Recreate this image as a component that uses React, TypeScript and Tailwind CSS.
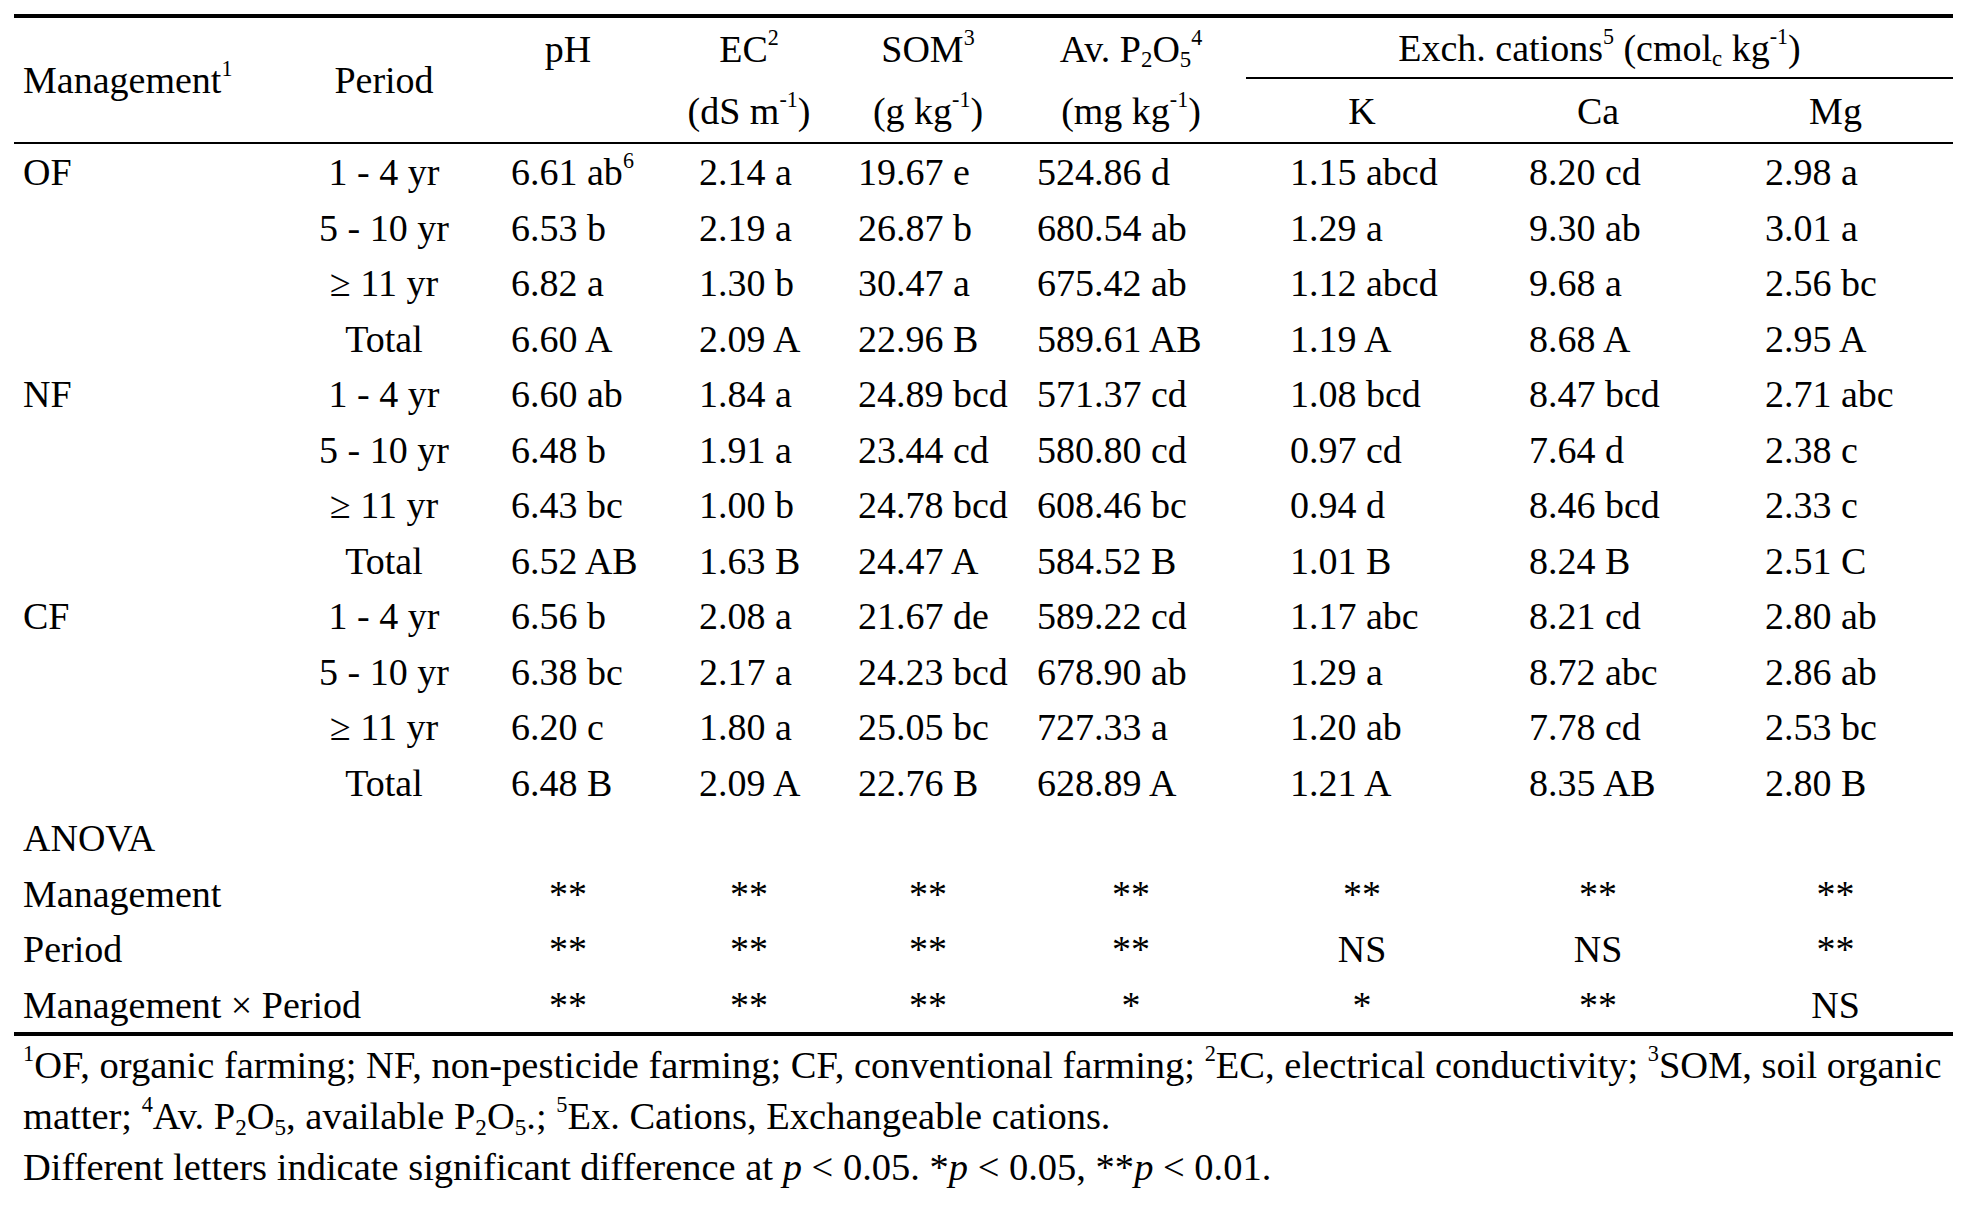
const cols = "grid grid-cols-[276px_188px_180px_182px_176px_230px_232px_240px_235px]";

// left padding of data values inside each numeric column
const pads = ["pl-[33px]", "pl-[41px]", "pl-[18px]", "pl-[21px]", "pl-[44px]", "pl-[51px]", "pl-[47px]"];

const Sup = ({ children }: { children: React.ReactNode }) => (
  <sup className="text-[0.58em] top-[-0.75em]">{children}</sup>
);
const Sub = ({ children }: { children: React.ReactNode }) => (
  <sub className="text-[0.6em]">{children}</sub>
);

type Row = { group?: string; period: string; values: React.ReactNode[] };

const rows: Row[] = [
  { group: "OF", period: "1 - 4 yr", values: [<>6.61 ab<Sup>6</Sup></>, "2.14 a", "19.67 e", "524.86 d", "1.15 abcd", "8.20 cd", "2.98 a"] },
  { period: "5 - 10 yr", values: ["6.53 b", "2.19 a", "26.87 b", "680.54 ab", "1.29 a", "9.30 ab", "3.01 a"] },
  { period: "≥ 11 yr", values: ["6.82 a", "1.30 b", "30.47 a", "675.42 ab", "1.12 abcd", "9.68 a", "2.56 bc"] },
  { period: "Total", values: ["6.60 A", "2.09 A", "22.96 B", "589.61 AB", "1.19 A", "8.68 A", "2.95 A"] },
  { group: "NF", period: "1 - 4 yr", values: ["6.60 ab", "1.84 a", "24.89 bcd", "571.37 cd", "1.08 bcd", "8.47 bcd", "2.71 abc"] },
  { period: "5 - 10 yr", values: ["6.48 b", "1.91 a", "23.44 cd", "580.80 cd", "0.97 cd", "7.64 d", "2.38 c"] },
  { period: "≥ 11 yr", values: ["6.43 bc", "1.00 b", "24.78 bcd", "608.46 bc", "0.94 d", "8.46 bcd", "2.33 c"] },
  { period: "Total", values: ["6.52 AB", "1.63 B", "24.47 A", "584.52 B", "1.01 B", "8.24 B", "2.51 C"] },
  { group: "CF", period: "1 - 4 yr", values: ["6.56 b", "2.08 a", "21.67 de", "589.22 cd", "1.17 abc", "8.21 cd", "2.80 ab"] },
  { period: "5 - 10 yr", values: ["6.38 bc", "2.17 a", "24.23 bcd", "678.90 ab", "1.29 a", "8.72 abc", "2.86 ab"] },
  { period: "≥ 11 yr", values: ["6.20 c", "1.80 a", "25.05 bc", "727.33 a", "1.20 ab", "7.78 cd", "2.53 bc"] },
  { period: "Total", values: ["6.48 B", "2.09 A", "22.76 B", "628.89 A", "1.21 A", "8.35 AB", "2.80 B"] },
];

const anova = [
  { label: "Management", values: ["**", "**", "**", "**", "**", "**", "**"] },
  { label: "Period", values: ["**", "**", "**", "**", "NS", "NS", "**"] },
  { label: "Management × Period", values: ["**", "**", "**", "*", "*", "**", "NS"] },
];

export default function App() {
  return (
    <div className="w-[1967px] h-[1212px] bg-white text-black font-['Liberation_Serif','Times_New_Roman',serif] pt-[14px] pl-[14px]">
      <div className="w-[1939px] border-t-4 border-black">
        {/* Header */}
        <div className={`${cols} h-[126px] text-[38px] leading-none border-b-2 border-black`}>
          <div className="row-span-2 flex items-center pl-[9px]">
            <span>Management<Sup>1</Sup></span>
          </div>
          <div className="row-span-2 flex items-center justify-center">Period</div>
          <div className="flex flex-col">
            <div className="h-[61px] flex items-center justify-center">pH</div>
            <div className="h-[63px]"></div>
          </div>
          <div className="flex flex-col">
            <div className="h-[61px] flex items-center justify-center"><span>EC<Sup>2</Sup></span></div>
            <div className="h-[63px] flex items-center justify-center"><span>(dS m<Sup>-1</Sup>)</span></div>
          </div>
          <div className="flex flex-col">
            <div className="h-[61px] flex items-center justify-center"><span>SOM<Sup>3</Sup></span></div>
            <div className="h-[63px] flex items-center justify-center"><span>(g kg<Sup>-1</Sup>)</span></div>
          </div>
          <div className="flex flex-col">
            <div className="h-[61px] flex items-center justify-center"><span>Av. P<Sub>2</Sub>O<Sub>5</Sub><Sup>4</Sup></span></div>
            <div className="h-[63px] flex items-center justify-center"><span>(mg kg<Sup>-1</Sup>)</span></div>
          </div>
          <div className="col-span-3 flex flex-col">
            <div className="h-[61px] flex items-center justify-center border-b-2 border-black">
              <span>Exch. cations<Sup>5</Sup> (cmol<Sub>c</Sub> kg<Sup>-1</Sup>)</span>
            </div>
            <div className="grid grid-cols-[232px_240px_235px] h-[63px]">
              <div className="flex items-center justify-center">K</div>
              <div className="flex items-center justify-center">Ca</div>
              <div className="flex items-center justify-center">Mg</div>
            </div>
          </div>
        </div>

        {/* Body */}
        <div className="text-[38px] border-b-4 border-black">
          {rows.map((r, i) => (
            <div key={i} className={`${cols} h-[55.5px] items-center`}>
              <div className="pl-[9px]">{r.group}</div>
              <div className="text-center">{r.period}</div>
              {r.values.map((v, j) => (
                <div key={j} className={`${pads[j]} whitespace-nowrap`}>{v}</div>
              ))}
            </div>
          ))}
          <div className={`${cols} h-[55.5px] items-center`}>
            <div className="pl-[9px] col-span-2">ANOVA</div>
          </div>
          {anova.map((a, i) => (
            <div key={i} className={`${cols} h-[55.5px] items-center`}>
              <div className="pl-[9px] col-span-2 whitespace-nowrap">{a.label}</div>
              {a.values.map((v, j) => (
                <div key={j} className="text-center">{v}</div>
              ))}
            </div>
          ))}
        </div>

        {/* Footnotes */}
        <div className="pl-[9px] pt-[4px] text-[38.5px] leading-[51px]">
          <div className="whitespace-nowrap">
            <Sup>1</Sup>OF, organic farming; NF, non-pesticide farming; CF, conventional farming; <Sup>2</Sup>EC, electrical conductivity; <Sup>3</Sup>SOM, soil organic
          </div>
          <div className="whitespace-nowrap">
            matter; <Sup>4</Sup>Av. P<Sub>2</Sub>O<Sub>5</Sub>, available P<Sub>2</Sub>O<Sub>5</Sub>.; <Sup>5</Sup>Ex. Cations, Exchangeable cations.
          </div>
          <div className="whitespace-nowrap">
            Different letters indicate significant difference at <i>p</i> &lt; 0.05. *<i>p</i> &lt; 0.05, **<i>p</i> &lt; 0.01.
          </div>
        </div>
      </div>
    </div>
  );
}
